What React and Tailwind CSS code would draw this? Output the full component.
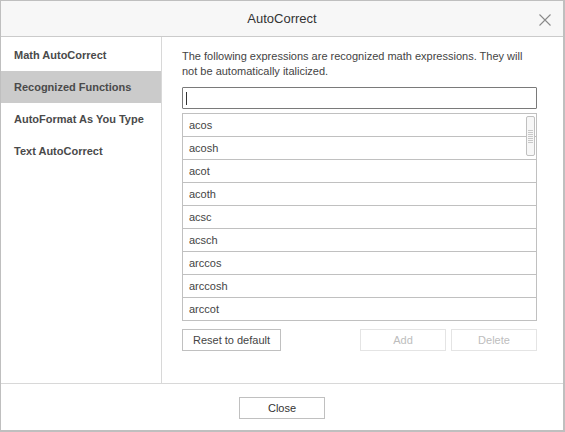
import React from "react";

const items = ["Math AutoCorrect", "Recognized Functions", "AutoFormat As You Type", "Text AutoCorrect"];
const funcs = ["acos", "acosh", "acot", "acoth", "acsc", "acsch", "arccos", "arccosh", "arccot"];

export default function App() {
  return (
    <div className="w-[565px] h-[432px] bg-[#bfbfbf] pl-px pt-px pr-[2px] pb-[2px]" style={{ fontFamily: '"Liberation Sans", Arial, sans-serif' }}>
      <div className="w-full h-full bg-white flex flex-col">
        <div className="h-[36px] shrink-0 bg-[#f7f7f7] border-b border-[#cbcbcb] flex items-center justify-center relative">
          <span className="text-[13px] text-[#333]">AutoCorrect</span>
          <svg className="absolute right-[12px] top-[13px]" width="12" height="12" viewBox="0 0 12 12">
            <path d="M0.5 0.5 L11.5 11.5 M11.5 0.5 L0.5 11.5" stroke="#8a8a8a" strokeWidth="1.1" fill="none" />
          </svg>
        </div>
        <div className="flex flex-1 min-h-0">
          <div className="w-[161px] shrink-0 border-r border-[#d8d8d8] pt-[2px]">
            {items.map((it, i) => (
              <div key={it} className={`h-[32px] flex items-center pl-[13px] text-[11px] font-bold text-[#4a4a4a] ${i === 1 ? "bg-[#cbcbcb]" : ""}`}>{it}</div>
            ))}
          </div>
          <div className="flex-1 pl-[20px] pr-[26px] pt-[12px]">
            <p className="text-[11px] leading-[15px] text-[#444]">The following expressions are recognized math expressions. They will not be automatically italicized.</p>
            <div className="mt-[8px] h-[22px] border border-[#7a7a7a] rounded-[1px] flex items-center pl-[3px]">
              <div className="w-px h-[13px] bg-[#333]" />
            </div>
            <div className="mt-[4px] h-[208px] border border-[#c0c0c0] relative overflow-hidden">
              {funcs.map((f) => (
                <div key={f} className="h-[23px] border-b border-[#c0c0c0] flex items-center pl-[6px] text-[11px] text-[#444]">{f}</div>
              ))}
              <div className="absolute right-[1px] top-[2px] w-[9px] h-[40px] rounded-[2px] border border-[#c0c0c0] bg-[#f7f7f7] flex flex-col items-center justify-center gap-[1px]">
                {[0, 1, 2, 3, 4, 5, 6].map((k) => (
                  <div key={k} className="w-[5px] h-px bg-[#c8c8c8]" />
                ))}
              </div>
            </div>
            <div className="mt-[8px] flex items-center">
              <button className="h-[22px] w-[99px] border border-[#c0c0c0] text-[11px] text-[#444] bg-white">Reset to default</button>
              <div className="flex-1" />
              <button className="h-[22px] w-[86px] border border-[#e4e4e4] text-[11px] text-[#bdbdbd] bg-white">Add</button>
              <button className="ml-[5px] h-[22px] w-[86px] border border-[#e4e4e4] text-[11px] text-[#bdbdbd] bg-white">Delete</button>
            </div>
          </div>
        </div>
        <div className="h-[47px] shrink-0 border-t border-[#d8d8d8] flex items-center justify-center pt-[2px]">
          <button className="h-[22px] w-[86px] border border-[#c0c0c0] text-[11px] text-[#333] bg-white font-medium">Close</button>
        </div>
      </div>
    </div>
  );
}
